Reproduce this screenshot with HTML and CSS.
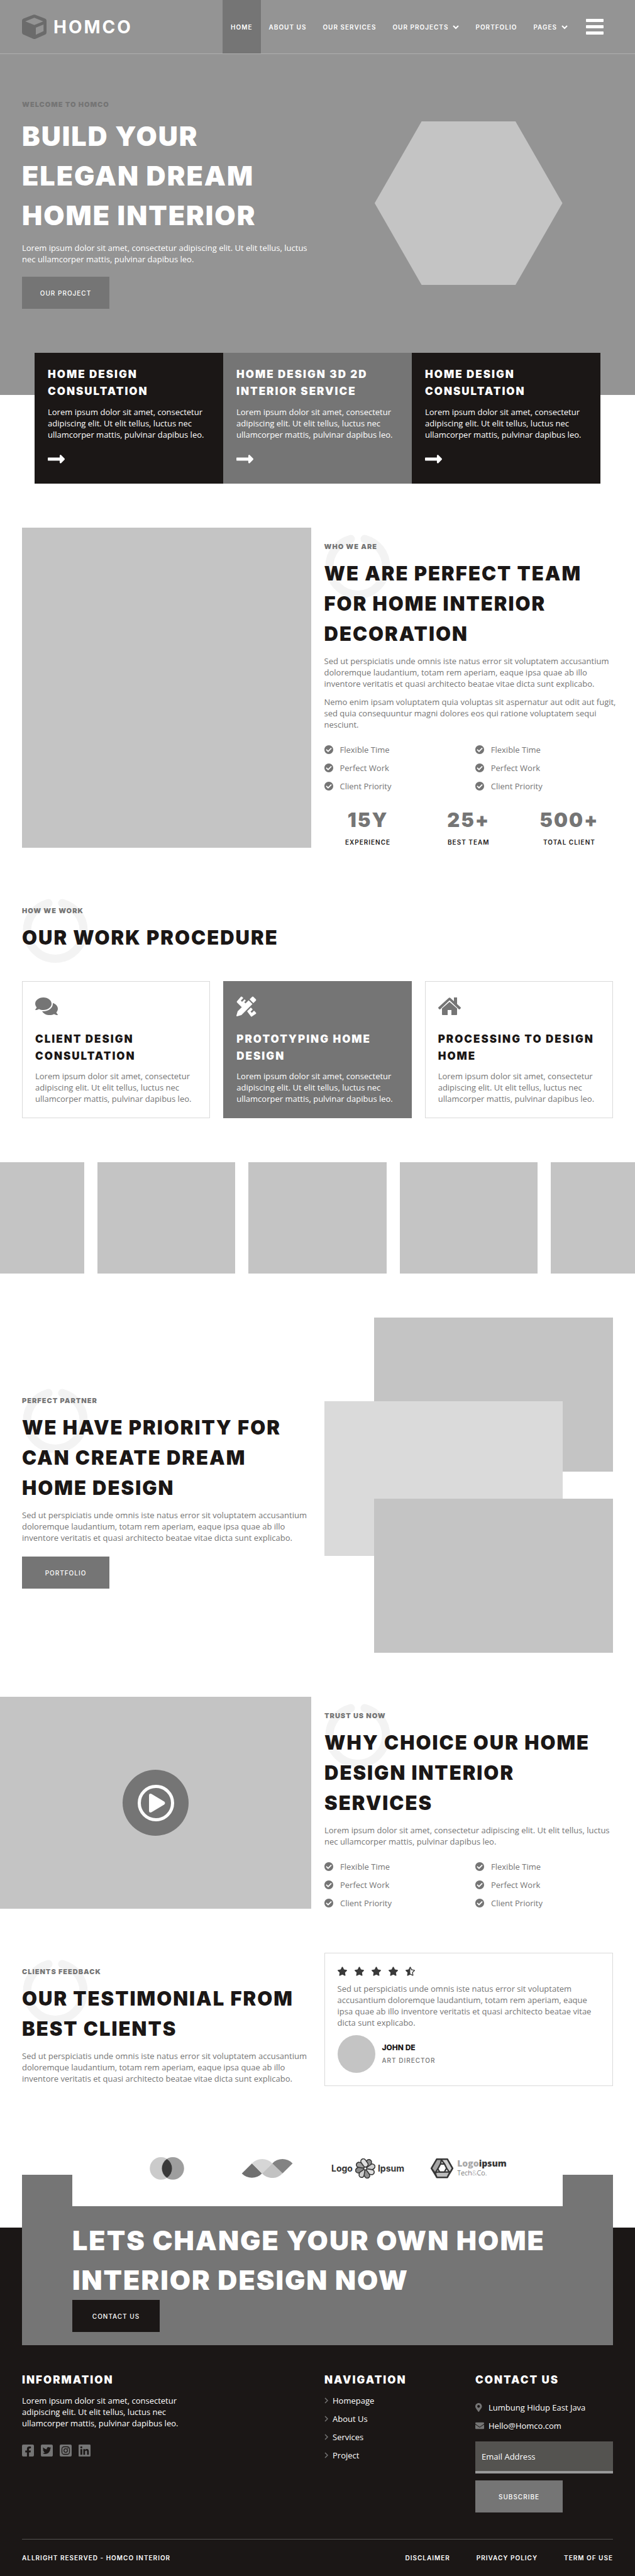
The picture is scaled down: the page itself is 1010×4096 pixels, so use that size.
FILE: index.html
```html
<!DOCTYPE html>
<html lang="en">
<head>
<meta charset="utf-8">
<meta name="viewport" content="width=device-width, initial-scale=1">
<title>Homco</title>
<link rel="stylesheet" href="styles.css">
</head>
<body>
<svg class="sprite" aria-hidden="true">
  <symbol id="ring" viewBox="0 0 104 102"><path d="M41 7C20 13 7 30 7 50.500a45 45 0 0 0 90 0C97 30 84 13 63 7" fill="none" stroke="currentColor" stroke-width="13" stroke-linecap="round"/></symbol>
  <symbol id="check" viewBox="8 8 496 496"><path d="M504 256c0 136.967-111.033 248-248 248S8 392.967 8 256 119.033 8 256 8s248 111.033 248 248zM227.314 387.314l184-184c6.248-6.248 6.248-16.379 0-22.627l-22.627-22.627c-6.248-6.249-16.379-6.249-22.628 0L216 308.118l-70.059-70.059c-6.248-6.248-16.379-6.248-22.628 0l-22.627 22.627c-6.248 6.248-6.248 16.379 0 22.627l104 104c6.249 6.249 16.379 6.249 22.628.001z"/></symbol>
  <symbol id="arrow" viewBox="0 146 448 220"><path d="M313.941 216H12c-6.627 0-12 5.373-12 12v56c0 6.627 5.373 12 12 12h301.941v46.059c0 21.382 25.851 32.09 40.971 16.971l86.059-86.059c9.373-9.373 9.373-24.569 0-33.941l-86.059-86.059c-15.119-15.119-40.971-4.411-40.971 16.971V216z"/></symbol>
  <symbol id="star" viewBox="20 0 536 512"><path d="M259.3 17.8L194 150.2 47.9 171.5c-26.2 3.8-36.7 36.1-17.7 54.6l105.700 103-25 145.500c-4.500 26.300 23.200 46 46.400 33.700L288 439.600l130.700 68.700c23.200 12.200 50.900-7.400 46.400-33.700l-25-145.500 105.700-103c19-18.500 8.500-50.800-17.700-54.600L382 150.200 316.700 17.800c-11.700-23.600-45.600-23.900-57.400 0z"/></symbol>
  <symbol id="star-half" viewBox="20 0 536 512"><path fill-rule="evenodd" d="M259.3 17.8L194 150.2 47.9 171.5c-26.2 3.8-36.7 36.1-17.7 54.6l105.700 103-25 145.500c-4.500 26.300 23.200 46 46.400 33.700L288 439.600l130.700 68.700c23.200 12.200 50.900-7.400 46.400-33.700l-25-145.500 105.700-103c19-18.500 8.500-50.800-17.700-54.600L382 150.200 316.700 17.800c-11.700-23.600-45.600-23.900-57.400 0zM288 385l126 66-24-140 102-99-141-21-63-127z"/></symbol>
  <symbol id="chevron-down" viewBox="0 0 10 8"><path d="M1 2l4 4 4-4" fill="none" stroke="currentColor" stroke-width="2"/></symbol>
  <symbol id="chevron-right" viewBox="0 0 6 10"><path d="M1 1l4 4-4 4" fill="none" stroke="currentColor" stroke-width="1.500"/></symbol>
</svg>

<header class="header">
  <a class="logo" href="#">
    <svg class="logo-mark" viewBox="30 42 165 164" aria-hidden="true"><path fill-rule="evenodd" d="M106 44q7-3 13 0l66 25q10 4 10 14v79q0 10-9 15l-65 28q-8 3-15 0l-66-28q-10-5-10-15V83q0-10 10-14zM113 64L52 88l61 24 60-24zM123 130v48l52-24v-45z"/></svg>
    <span>HOMCO</span>
  </a>
  <nav class="nav">
    <a class="is-active" href="#">HOME</a>
    <a href="#">ABOUT US</a>
    <a href="#">OUR SERVICES</a>
    <a href="#">OUR PROJECTS<svg viewBox="0 0 10 8"><use href="#chevron-down"/></svg></a>
    <a href="#">PORTFOLIO</a>
    <a href="#">PAGES<svg viewBox="0 0 10 8"><use href="#chevron-down"/></svg></a>
  </nav>
  <button class="menu" type="button" aria-label="Menu"><i></i><i></i><i></i></button>
</header>

<section class="hero">
  <div>
    <p class="eyebrow">WELCOME TO HOMCO</p>
    <h1 class="display">BUILD YOUR<br>ELEGAN DREAM<br>HOME INTERIOR</h1>
    <p class="hero-text">Lorem ipsum dolor sit amet, consectetur adipiscing elit. Ut elit tellus, luctus<br>nec ullamcorper mattis, pulvinar dapibus leo.</p>
    <a class="btn" href="#">OUR PROJECT</a>
  </div>
  <div class="hexagon"></div>
</section>

<section class="offers">
  <article class="offer">
    <h3 class="title">HOME DESIGN<br>CONSULTATION</h3>
    <p>Lorem ipsum dolor sit amet, consectetur<br>adipiscing elit. Ut elit tellus, luctus nec<br>ullamcorper mattis, pulvinar dapibus leo.</p>
    <a href="#" aria-label="Home design consultation"><svg class="arrow"><use href="#arrow"/></svg></a>
  </article>
  <article class="offer is-gray">
    <h3 class="title">HOME DESIGN 3D 2D<br>INTERIOR SERVICE</h3>
    <p>Lorem ipsum dolor sit amet, consectetur<br>adipiscing elit. Ut elit tellus, luctus nec<br>ullamcorper mattis, pulvinar dapibus leo.</p>
    <a href="#" aria-label="Interior service"><svg class="arrow"><use href="#arrow"/></svg></a>
  </article>
  <article class="offer">
    <h3 class="title">HOME DESIGN<br>CONSULTATION</h3>
    <p>Lorem ipsum dolor sit amet, consectetur<br>adipiscing elit. Ut elit tellus, luctus nec<br>ullamcorper mattis, pulvinar dapibus leo.</p>
    <a href="#" aria-label="Home design consultation"><svg class="arrow"><use href="#arrow"/></svg></a>
  </article>
</section>

<section class="section split">
  <div class="photo"></div>
  <div class="copy">
    <svg class="ring"><use href="#ring"/></svg>
    <p class="eyebrow">WHO WE ARE</p>
    <h2 class="heading">WE ARE PERFECT TEAM<br>FOR HOME INTERIOR<br>DECORATION</h2>
    <p>Sed ut perspiciatis unde omnis iste natus error sit voluptatem accusantium<br>doloremque laudantium, totam rem aperiam, eaque ipsa quae ab illo<br>inventore veritatis et quasi architecto beatae vitae dicta sunt explicabo.</p>
    <p class="next">Nemo enim ipsam voluptatem quia voluptas sit aspernatur aut odit aut fugit,<br>sed quia consequuntur magni dolores eos qui ratione voluptatem sequi<br>nesciunt.</p>
    <ul class="checks">
      <li><svg><use href="#check"/></svg>Flexible Time</li><li><svg><use href="#check"/></svg>Flexible Time</li>
      <li><svg><use href="#check"/></svg>Perfect Work</li><li><svg><use href="#check"/></svg>Perfect Work</li>
      <li><svg><use href="#check"/></svg>Client Priority</li><li><svg><use href="#check"/></svg>Client Priority</li>
    </ul>
    <div class="stats">
      <div><strong>15Y</strong><span>EXPERIENCE</span></div>
      <div><strong>25+</strong><span>BEST TEAM</span></div>
      <div><strong>500+</strong><span>TOTAL CLIENT</span></div>
    </div>
  </div>
</section>

<section class="section">
  <div class="copy">
    <svg class="ring"><use href="#ring"/></svg>
    <p class="eyebrow">HOW WE WORK</p>
    <h2 class="heading">OUR WORK PROCEDURE</h2>
  </div>
  <div class="steps">
    <article class="step">
      <svg viewBox="0 -32 576 576"><path d="M416 192c0-88.400-93.100-160-208-160S0 103.600 0 192c0 34.300 14.100 65.900 38 92-13.400 30.200-35.500 54.200-35.800 54.500-2.200 2.300-2.800 5.700-1.500 8.700S4.800 352 8 352c36.600 0 66.900-12.300 88.700-25 32.200 15.700 70.300 25 111.300 25 114.900 0 208-71.600 208-160zm122 220c23.900-26 38-57.700 38-92 0-66.900-53.500-124.200-129.300-148.100.9 6.600 1.300 13.300 1.300 20.100 0 105.900-107.700 192-240 192-10.800 0-21.300-.8-31.700-1.900C207.800 439.600 281.800 480 368 480c41 0 79.100-9.200 111.300-25 21.800 12.700 52.100 25 88.700 25 3.200 0 6.100-1.900 7.300-4.800 1.300-2.900.7-6.300-1.500-8.700-.3-.3-22.400-24.200-35.800-54.500z"/></svg>
      <h3 class="title">CLIENT DESIGN<br>CONSULTATION</h3>
      <p>Lorem ipsum dolor sit amet, consectetur<br>adipiscing elit. Ut elit tellus, luctus nec<br>ullamcorper mattis, pulvinar dapibus leo.</p>
    </article>
    <article class="step is-gray">
      <svg viewBox="0 -2 36 36"><path d="M7 1q1-1 2 0l2 2-4 4 2 2 4-4 2 2-2.500 2.500L15 12l-6 6-8-8q-1-1 0-2zM17 24l6-6 3 3-3.500 3.500 2 2L28 23l3 3q1 1 0 2l-6 4q-1 1-2 0zM19.500 6.500l6 6L8 30 1 32q-1 0-1-1l2-7zM21 5l4-4q1-1 2 0l4 4q1 1 0 2l-4 4z"/></svg>
      <h3 class="title">PROTOTYPING HOME<br>DESIGN</h3>
      <p>Lorem ipsum dolor sit amet, consectetur<br>adipiscing elit. Ut elit tellus, luctus nec<br>ullamcorper mattis, pulvinar dapibus leo.</p>
    </article>
    <article class="step">
      <svg viewBox="0 0 36 36"><path d="M18 11l12 10.500V31q0 1-1 1h-8v-8h-6v8H7q-1 0-1-1v-9.500zM16.500 5q1.500-1.500 3 0l5.500 5V4h5v10.500l5.500 5q1 1 0 2l-1 1q-1 1-2 0L18 8.500 3.500 22.500q-1 1-2 0l-1-1q-1-1 0-2z"/></svg>
      <h3 class="title">PROCESSING TO DESIGN<br>HOME</h3>
      <p>Lorem ipsum dolor sit amet, consectetur<br>adipiscing elit. Ut elit tellus, luctus nec<br>ullamcorper mattis, pulvinar dapibus leo.</p>
    </article>
  </div>
</section>

<div class="gallery"><div></div><div></div><div></div><div></div><div></div></div>

<section class="section split is-centered">
  <div class="copy">
    <svg class="ring"><use href="#ring"/></svg>
    <p class="eyebrow">PERFECT PARTNER</p>
    <h2 class="heading">WE HAVE PRIORITY FOR<br>CAN CREATE DREAM<br>HOME DESIGN</h2>
    <p>Sed ut perspiciatis unde omnis iste natus error sit voluptatem accusantium<br>doloremque laudantium, totam rem aperiam, eaque ipsa quae ab illo<br>inventore veritatis et quasi architecto beatae vitae dicta sunt explicabo.</p>
    <a class="btn" href="#">PORTFOLIO</a>
  </div>
  <div class="stack"><div></div><div></div><div></div></div>
</section>

<section class="section split is-bleed">
  <div class="photo video">
    <button class="play" type="button" aria-label="Play video"><svg viewBox="0 0 58 58"><circle cx="29" cy="29" r="26.500" fill="none" stroke="#fff" stroke-width="5"/><path d="M18 17q0-4 4-2.500l20 12q3 2.500 0 5l-20 12q-4 1.500-4-2.500z" fill="#fff"/></svg></button>
  </div>
  <div class="copy">
    <svg class="ring"><use href="#ring"/></svg>
    <p class="eyebrow">TRUST US NOW</p>
    <h2 class="heading">WHY CHOICE OUR HOME<br>DESIGN INTERIOR<br>SERVICES</h2>
    <p>Lorem ipsum dolor sit amet, consectetur adipiscing elit. Ut elit tellus, luctus<br>nec ullamcorper mattis, pulvinar dapibus leo.</p>
    <ul class="checks">
      <li><svg><use href="#check"/></svg>Flexible Time</li><li><svg><use href="#check"/></svg>Flexible Time</li>
      <li><svg><use href="#check"/></svg>Perfect Work</li><li><svg><use href="#check"/></svg>Perfect Work</li>
      <li><svg><use href="#check"/></svg>Client Priority</li><li><svg><use href="#check"/></svg>Client Priority</li>
    </ul>
  </div>
</section>

<section class="section split">
  <div class="copy">
    <svg class="ring"><use href="#ring"/></svg>
    <p class="eyebrow">CLIENTS FEEDBACK</p>
    <h2 class="heading">OUR TESTIMONIAL FROM<br>BEST CLIENTS</h2>
    <p>Sed ut perspiciatis unde omnis iste natus error sit voluptatem accusantium<br>doloremque laudantium, totam rem aperiam, eaque ipsa quae ab illo<br>inventore veritatis et quasi architecto beatae vitae dicta sunt explicabo.</p>
  </div>
  <article class="review">
    <div class="stars"><svg><use href="#star"/></svg><svg><use href="#star"/></svg><svg><use href="#star"/></svg><svg><use href="#star"/></svg><svg><use href="#star-half"/></svg></div>
    <p>Sed ut perspiciatis unde omnis iste natus error sit voluptatem<br>accusantium doloremque laudantium, totam rem aperiam, eaque<br>ipsa quae ab illo inventore veritatis et quasi architecto beatae vitae<br>dicta sunt explicabo.</p>
    <div class="author">
      <div class="avatar"></div>
      <div><p class="name">JOHN DE</p><p class="role">ART DIRECTOR</p></div>
    </div>
  </article>
</section>

<div class="closing">
  <div class="partners">
    <div><svg width="55" height="36" viewBox="55 57 235 155"><circle cx="132" cy="134" r="77" fill="#cbcbcb"/><circle cx="213" cy="134" r="77" fill="#9e9e9e"/><path d="M173 70a77 77 0 0 1 0 128a77 77 0 0 1 0-128z" fill="#3a3a3a"/></svg></div>
    <div><svg width="82" height="30" viewBox="683 69 350 130"><path d="M683 169l70-70 69 70a97 97 0 0 1-139 0z" fill="#707070"/><path d="M753 99a97 97 0 0 1 140 0l-71 70z" fill="#d6d6d6"/><path d="M822 169l71-70 71 69a97 97 0 0 1-142 1z" fill="#c2c2c2"/><path d="M893 99a97 97 0 0 1 140 0l-69 69z" fill="#838383"/></svg></div>
    <div class="partner-flower"><span>Logo</span>
      <svg width="32" height="32" viewBox="-68 -68 136 136" stroke="#373737" stroke-width="7"><g id="petals"><rect x="0" y="-64" width="34" height="60" rx="17" fill="#919191" transform="rotate(10)"/><rect x="0" y="-64" width="34" height="60" rx="17" fill="#cfcfcf" transform="rotate(55)"/><rect x="0" y="-64" width="34" height="60" rx="17" fill="#dedede" transform="rotate(100)"/><rect x="0" y="-64" width="34" height="60" rx="17" fill="#919191" transform="rotate(145)"/><rect x="0" y="-64" width="34" height="60" rx="17" fill="#cfcfcf" transform="rotate(190)"/><rect x="0" y="-64" width="34" height="60" rx="17" fill="#8a8a8a" transform="rotate(235)"/><rect x="0" y="-64" width="34" height="60" rx="17" fill="#a0a0a0" transform="rotate(280)"/><rect x="0" y="-64" width="34" height="60" rx="17" fill="#dedede" transform="rotate(325)"/></g></svg>
      <span>Ipsum</span></div>
    <div class="partner-tech">
      <svg width="38" height="33" viewBox="710 62 166 145" stroke="#373737" stroke-width="10" stroke-linejoin="round"><path d="M719 136l38-65h33l-7 34-20 36-18 27z" fill="#a5a5a5"/><path d="M785 71h45l37 65-19 31-23-32-15-30z" fill="#cdcdcd"/><path d="M745 168l18-7h86l-19 38h-73z" fill="#bcbcbc"/><path d="M783 105h27l15 30-15 26h-33l-13-21z" fill="#fff"/><path d="M719 136l38-65h73l37 65-37 63h-73z" fill="none"/></svg>
      <p><b><i>Logo</i>ipsum</b><br>Tech<i>&amp;</i>Co.</p>
    </div>
  </div>
  <section class="cta">
    <h2 class="display">LETS CHANGE YOUR OWN HOME<br>INTERIOR DESIGN NOW</h2>
    <a class="btn is-dark" href="#">CONTACT US</a>
  </section>
</div>

<footer class="footer">
  <div class="footer-cols">
    <div>
      <h3 class="title">INFORMATION</h3>
      <p>Lorem ipsum dolor sit amet, consectetur<br>adipiscing elit. Ut elit tellus, luctus nec<br>ullamcorper mattis, pulvinar dapibus leo.</p>
      <div class="social">
        <a href="#" aria-label="Facebook"><svg viewBox="0 32 448 448"><path d="M400 32H48A48 48 0 0 0 0 80v352a48 48 0 0 0 48 48h137.250V327.690h-63V256h63v-54.640c0-62.150 37-96.480 93.670-96.480 27.140 0 55.520 4.840 55.520 4.840v61h-31.270c-30.810 0-40.420 19.120-40.420 38.730V256h68.780l-11 71.690h-57.780V480H400a48 48 0 0 0 48-48V80a48 48 0 0 0-48-48z"/></svg></a>
        <a href="#" aria-label="Twitter"><svg viewBox="0 32 448 448"><path d="M400 32H48C21.500 32 0 53.500 0 80v352c0 26.500 21.500 48 48 48h352c26.500 0 48-21.500 48-48V80c0-26.500-21.500-48-48-48zm-48.900 158.800c.2 2.800.2 5.700.2 8.500 0 86.700-66 186.600-186.600 186.600-37.200 0-71.700-10.800-100.700-29.400 5.300.6 10.400.8 15.800.8 30.700 0 58.900-10.400 81.400-28-28.800-.6-53-19.500-61.300-45.500 10.100 1.500 19.200 1.500 29.600-1.200-30-6.100-52.500-32.500-52.500-64.400v-.8c8.700 4.900 18.900 7.900 29.600 8.300a65.447 65.447 0 0 1-29.200-54.600c0-12.200 3.200-23.400 8.900-33.100 32.300 39.800 80.800 65.800 135.200 68.600-9.300-44.500 24-80.600 64-80.600 18.900 0 35.900 7.900 47.900 20.700 14.800-2.800 29-8.300 41.600-15.800-4.900 15.200-15.200 28-28.800 36.100 13.200-1.400 26-5.100 37.800-10.200-8.900 13.100-20.100 24.700-32.900 34z"/></svg></a>
        <a href="#" aria-label="Instagram"><svg viewBox="0 0 19 19"><rect width="19" height="19" rx="2"/><g fill="none" stroke="#1b1716" stroke-width="1.300"><rect x="3.500" y="3.500" width="12" height="12" rx="3.500"/><circle cx="9.500" cy="9.500" r="2.800"/></g><circle cx="12.900" cy="6.100" r=".8" fill="#1b1716"/></svg></a>
        <a href="#" aria-label="LinkedIn"><svg viewBox="0 32 448 448"><path d="M416 32H31.900C14.300 32 0 46.500 0 64.300v383.400C0 465.500 14.300 480 31.900 480H416c17.600 0 32-14.500 32-32.300V64.300c0-17.800-14.400-32.300-32-32.300zM135.400 416H69V202.200h66.500V416zm-33.200-243c-21.300 0-38.500-17.300-38.500-38.500S80.900 96 102.200 96c21.200 0 38.500 17.300 38.500 38.500 0 21.300-17.200 38.500-38.500 38.500zm282.100 243h-66.400V312c0-24.800-.5-56.700-34.500-56.700-34.600 0-39.900 27-39.900 54.900V416h-66.400V202.200h63.700v29.200h.9c8.900-16.800 30.600-34.500 62.900-34.500 67.200 0 79.700 44.300 79.700 101.900V416z"/></svg></a>
      </div>
    </div>
    <nav>
      <h3 class="title">NAVIGATION</h3>
      <ul class="links">
        <li><a href="#"><svg><use href="#chevron-right"/></svg>Homepage</a></li>
        <li><a href="#"><svg><use href="#chevron-right"/></svg>About Us</a></li>
        <li><a href="#"><svg><use href="#chevron-right"/></svg>Services</a></li>
        <li><a href="#"><svg><use href="#chevron-right"/></svg>Project</a></li>
      </ul>
    </nav>
    <div>
      <h3 class="title">CONTACT US</h3>
      <ul class="contact">
        <li><svg viewBox="0 0 512 512"><path d="M172.268 501.670C26.970 291.031 0 269.413 0 192 0 85.961 85.961 0 192 0s192 85.961 192 192c0 77.413-26.970 99.031-172.268 309.670-9.535 13.774-29.930 13.773-39.464 0zM192 272c44.183 0 80-35.817 80-80s-35.817-80-80-80-80 35.817-80 80 35.817 80 80 80z"/></svg>Lumbung Hidup East Java</li>
        <li><svg viewBox="0 0 512 512"><path d="M502.300 190.800c3.900-3.100 9.700-.2 9.700 4.700V400c0 26.500-21.500 48-48 48H48c-26.500 0-48-21.500-48-48V195.600c0-5 5.700-7.800 9.700-4.700 22.400 17.400 52.100 39.500 154.100 113.600 21.100 15.400 56.700 47.800 92.200 47.600 35.700.3 72-32.800 92.300-47.600 102-74.100 131.600-96.300 154-113.700zM256 320c23.200.4 56.600-29.200 73.400-41.400 132.700-96.300 142.800-104.700 173.400-128.700 5.800-4.500 9.200-11.500 9.200-18.900v-19c0-26.500-21.500-48-48-48H48c-26.500 0-48 21.500-48 48v19c0 7.400 3.400 14.300 9.200 18.900 30.600 23.900 40.700 32.400 173.400 128.700 16.800 12.200 50.200 41.800 73.400 41.400z"/></svg>Hello@Homco.com</li>
      </ul>
      <form class="subscribe">
        <input type="email" placeholder="Email Address" aria-label="Email Address">
        <button class="btn" type="button">SUBSCRIBE</button>
      </form>
    </div>
  </div>
  <div class="legal">
    <span>ALLRIGHT RESERVED - HOMCO INTERIOR</span>
    <nav><a href="#">DISCLAIMER</a><a href="#">PRIVACY POLICY</a><a href="#">TERM OF USE</a></nav>
  </div>
</footer>
</body>
</html>
```
FILE: styles.css
```css
:root {
  --ink: #1b1716;
  --gray: #757575;
  --light: #c4c4c4;
  --gap: 21px;
  --edge: 35px;
  --display: Inter, "Liberation Sans", sans-serif;
}

* { box-sizing: border-box; margin: 0; padding: 0; }

body {
  font-family: "Open Sans", "Liberation Sans", sans-serif;
  font-size: 13px;
  line-height: 18px;
  color: var(--gray);
  background: #fff;
  overflow-x: hidden;
}

a { color: inherit; text-decoration: none; }
ul { list-style: none; }
svg { display: block; fill: currentColor; }
button, input { font: inherit; border: 0; border-radius: 0; }
.sprite { position: absolute; width: 0; height: 0; }

/* Shared type */
.eyebrow, .display, .heading, .title, .btn, .logo, .nav, .stats, .author, .legal, .partner-flower { font-family: var(--display); }
.eyebrow { font-size: 11px; font-weight: 900; letter-spacing: 1px; }
.display { font-size: 43px; line-height: 63px; font-weight: 900; letter-spacing: 2px; color: #fff; }
.heading { margin: 10px 0; font-size: 31px; line-height: 48px; font-weight: 900; letter-spacing: 2px; color: var(--ink); }
.title { font-size: 17px; line-height: 27px; font-weight: 900; letter-spacing: 2px; }

.btn {
  display: flex;
  align-items: center;
  justify-content: center;
  width: 139px;
  height: 51px;
  font-size: 10px;
  font-weight: 500;
  letter-spacing: 1px;
  color: #fff;
  background: var(--gray);
}
.btn.is-dark { background: var(--ink); }
.is-gray { background: var(--gray); }

/* Header */
.header {
  display: flex;
  justify-content: space-between;
  height: 86px;
  padding: 0 var(--edge);
  color: #fff;
  background: #949494;
  border-bottom: 1px solid #b0b0b0;
}
.logo { display: flex; align-items: center; gap: 11px; margin-right: auto; font-size: 28px; font-weight: 700; letter-spacing: 3px; }
.logo-mark { width: 39px; height: 39px; color: #6b6b6b; }
.nav { display: flex; }
.nav a { display: flex; align-items: center; gap: 7px; padding: 0 13px; font-size: 10px; font-weight: 600; letter-spacing: 1px; }
.nav a.is-active { background: var(--gray); }
.nav svg { width: 10px; height: 8px; }
.menu { display: flex; flex-direction: column; justify-content: center; gap: 5px; margin-left: 16px; padding: 0 15px 0 0; background: none; }
.menu i { width: 28px; height: 5px; background: #fff; border-radius: 1px; }

/* Hero */
.hero {
  display: grid;
  grid-template-columns: 1fr 1fr;
  gap: var(--gap);
  align-items: start;
  padding: 71px var(--edge) 137px;
  background: #949494;
}
.hero .eyebrow { margin-bottom: 10px; }
.hero-text { margin: 11px 0 19px; color: #fff; }
.hexagon {
  width: 65%;
  height: 260px;
  margin: 36px auto 0;
  background: var(--light);
  clip-path: polygon(25% 0, 75% 0, 100% 50%, 75% 100%, 25% 100%, 0 50%);
}

.offers { display: grid; grid-template-columns: repeat(3, 1fr); margin: -67px 55px 0; color: #fff; }
.offer { padding: 21px 21px 32px; background: var(--ink); }
.offer.is-gray { background: var(--gray); }
.offer p { margin: 10px 0 23px; }
.arrow { width: 27px; height: 14px; }

/* Sections */
.section { padding: 70px var(--edge) 0; }
.split { display: grid; grid-template-columns: minmax(0, 1fr) minmax(0, 1fr); gap: var(--gap); }
.is-centered { align-items: center; }
.is-bleed { padding-left: 0; grid-template-columns: minmax(0, 495fr) minmax(0, 459fr); }
.copy { position: relative; padding-top: 21px; }
.copy > * { position: relative; }
.copy > .ring { position: absolute; top: 11px; left: 1px; width: 104px; height: 102px; color: #f3f3f3; }
.copy p { white-space: nowrap; }
.copy .next { margin-top: 11px; }
.copy .btn { margin-top: 21px; }
.photo { background: var(--light); }

.checks { display: grid; grid-template-columns: 1fr 1fr; gap: 11px var(--gap); margin-top: 22px; }
.checks li { display: flex; align-items: center; gap: 11px; }
.checks svg { width: 14px; height: 14px; }

.stats { display: grid; grid-template-columns: repeat(3, 1fr); gap: var(--gap); margin-top: 21px; text-align: center; }
.stats strong { display: block; font-size: 31px; line-height: 48px; font-weight: 900; letter-spacing: 2px; }
.stats span { display: block; margin-top: 2px; font-size: 10px; font-weight: 600; letter-spacing: 1px; color: var(--ink); }

.steps { display: grid; grid-template-columns: repeat(3, 1fr); gap: var(--gap); margin-top: 45px; }
.step { padding: 21px 20px; border: 1px solid #dadada; }
.step svg { width: 36px; height: 36px; margin-bottom: 21px; }
.step .title { margin-bottom: 9px; color: var(--ink); }
.step.is-gray { border-color: var(--gray); color: #fff; }
.step.is-gray .title { color: #fff; }

.gallery { display: flex; justify-content: center; gap: var(--gap); margin-top: 70px; overflow: hidden; }
.gallery div { flex: 0 0 calc(25% - 33px); height: 177px; background: var(--light); }

/* Three overlapping panels */
.stack { display: grid; grid-template: 133px 112px 43px 91px 154px / 80fr 300fr 80fr; }
.stack div { grid-area: 1 / 2 / 3 / 4; background: var(--light); }
.stack div:nth-child(2) { grid-area: 2 / 1 / 5 / 3; background: #dadada; }
.stack div:nth-child(3) { grid-area: 4 / 2 / 6 / 4; }

.video { display: flex; align-items: center; justify-content: center; }
.play { display: flex; align-items: center; justify-content: center; width: 105px; height: 105px; border-radius: 50%; background: var(--gray); }
.play svg { width: 58px; height: 58px; }

/* Testimonial */
.review { padding: 21px 20px 20px; border: 1px solid #dadada; }
.stars { display: flex; gap: 12px; margin-bottom: 11px; color: #3a3a3a; }
.stars svg { width: 15px; height: 15px; }
.author { display: flex; align-items: center; gap: 11px; margin-top: 11px; }
.avatar { width: 60px; height: 60px; border-radius: 50%; background: var(--light); }
.name { margin-bottom: 2px; font-size: 12px; font-weight: 800; color: var(--ink); }
.role { font-size: 10px; font-weight: 500; letter-spacing: 1px; }

/* Partners and call to action */
.closing { padding: 70px var(--edge) 0; background: linear-gradient(#fff 225px, var(--ink) 225px); }
.partners {
  position: relative;
  display: grid;
  grid-template-columns: repeat(4, 160px);
  justify-content: center;
  height: 121px;
  margin: 0 80px -50px;
  background: #fff;
}
.partners > div { display: flex; align-items: center; justify-content: center; }
.partner-flower { gap: 4px; font-size: 14px; font-weight: 700; color: #373737; }
.partner-tech { gap: 5px; }
.partner-tech p { font: 300 11px/14px "Open Sans", sans-serif; color: #373737; }
.partner-tech b { font: 800 14px/14px "Open Sans", sans-serif; }
.partner-tech i { font-style: normal; color: #a8a8a8; }
.cta { padding: 73px 0 21px 80px; background: var(--gray); }

/* Footer */
.footer { padding: 42px var(--edge) 0; color: #fff; background: var(--ink); }
.footer-cols { display: grid; grid-template-columns: 460fr 219fr 219fr; gap: var(--gap); padding-bottom: 42px; border-bottom: 1px solid #545350; }
.footer .title { margin-bottom: 10px; }
.social { display: flex; gap: 11px; margin-top: 25px; color: var(--gray); }
.social svg { width: 19px; height: 19px; }
.links, .contact { display: grid; gap: 11px; }
.links a { display: flex; align-items: center; gap: 7px; }
.links svg { width: 6px; height: 10px; color: var(--gray); }
.contact { margin-top: 21px; }
.contact li { display: flex; align-items: center; gap: 7px; }
.contact svg { width: 14px; height: 14px; color: var(--gray); }
.subscribe { display: grid; gap: 11px; margin-top: 16px; }
.subscribe input { width: 100%; height: 51px; padding: 0 10px; color: #fff; background: #545350; border-bottom: 4px solid #999; }
.subscribe input::placeholder { color: #fff; opacity: 1; }
.legal { display: flex; align-items: center; justify-content: space-between; height: 58px; font-size: 10px; font-weight: 600; letter-spacing: 1px; }
.legal nav { display: flex; gap: 42px; }
```
